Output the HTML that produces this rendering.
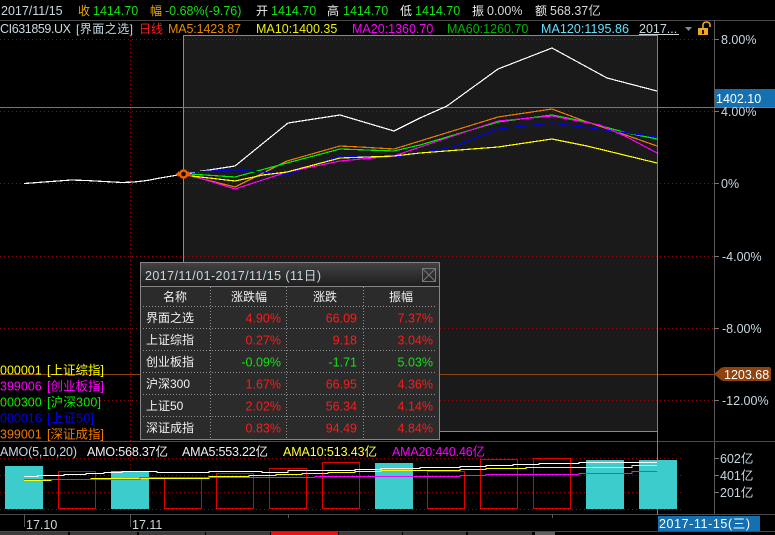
<!DOCTYPE html>
<html><head><meta charset="utf-8"><style>
html,body{margin:0;padding:0;background:#000;width:775px;height:535px;overflow:hidden}
svg{display:block;position:absolute;left:0;top:0}
text{font-family:"Liberation Sans","Noto Sans CJK SC",sans-serif;font-size:12.5px;fill:#d8d8d8}
.g{fill:#14e014}.o{fill:#f0a800}.w{fill:#f0f0f0}.r{fill:#ff1a1a}.v{fill:#c8d8e0}
.l line,.c{shape-rendering:crispEdges}
polyline{fill:none;shape-rendering:crispEdges;stroke-width:1.2}
.vol polyline{stroke-width:1}
.d{stroke:#8c0a0a;stroke-width:1;stroke-dasharray:1 3;shape-rendering:crispEdges}
.p{stroke:#909090;stroke-width:1;stroke-dasharray:1 2;shape-rendering:crispEdges}
</style></head><body>
<svg width="775" height="535" viewBox="0 0 775 535" xmlns="http://www.w3.org/2000/svg">
<rect width="775" height="535" fill="#000"/>
<!-- overlay background -->
<rect class="c" x="183" y="35" width="475" height="397" fill="#1a1a1a"/>
<!-- grid -->
<g class="d">
<line x1="0" y1="39.5" x2="714" y2="39.5"/><line x1="0" y1="111.5" x2="714" y2="111.5"/>
<line x1="0" y1="183.5" x2="714" y2="183.5"/><line x1="0" y1="256.5" x2="714" y2="256.5"/>
<line x1="0" y1="328.5" x2="714" y2="328.5"/><line x1="0" y1="400.5" x2="714" y2="400.5"/>
<line x1="130.5" y1="36" x2="130.5" y2="510"/>
<line x1="0" y1="458.5" x2="684" y2="458.5"/><line x1="0" y1="475.5" x2="684" y2="475.5"/>
<line x1="0" y1="492.5" x2="684" y2="492.5"/><line x1="0" y1="509.5" x2="684" y2="509.5"/>
</g>
<!-- frame lines -->
<g class="l">
<line x1="0" y1="20.5" x2="775" y2="20.5" stroke="#4a4a4a"/>
<line x1="714.5" y1="20" x2="714.5" y2="514" stroke="#5a5a5a"/>
<line x1="0" y1="441.5" x2="775" y2="441.5" stroke="#4a4a4a"/>
<line x1="0" y1="514.5" x2="775" y2="514.5" stroke="#4a4a4a"/>
<line x1="0" y1="531.5" x2="775" y2="531.5" stroke="#4a4a4a"/>
<line x1="0" y1="107.5" x2="775" y2="107.5" stroke="#777"/>
<line x1="0" y1="374.5" x2="714" y2="374.5" stroke="#8a4412"/>
<line x1="183" y1="35.5" x2="658" y2="35.5" stroke="#8a8a8a"/>
<line x1="183.5" y1="35" x2="183.5" y2="432" stroke="#8a8a8a"/>
<line x1="183" y1="431.5" x2="658" y2="431.5" stroke="#8a8a8a"/>
<line x1="657.5" y1="35" x2="657.5" y2="515" stroke="#808080"/>
<line x1="24.5" y1="514" x2="24.5" y2="527" stroke="#555"/>
<line x1="130.5" y1="514" x2="130.5" y2="527" stroke="#555"/>
<line x1="288.5" y1="514" x2="288.5" y2="518" stroke="#555"/>
<line x1="552.5" y1="514" x2="552.5" y2="518" stroke="#555"/>
<line x1="714" y1="39.5" x2="719" y2="39.5" stroke="#777"/>
<line x1="714" y1="111.5" x2="719" y2="111.5" stroke="#777"/>
<line x1="714" y1="183.5" x2="719" y2="183.5" stroke="#777"/>
<line x1="714" y1="256.5" x2="719" y2="256.5" stroke="#777"/>
<line x1="714" y1="328.5" x2="719" y2="328.5" stroke="#777"/>
<line x1="714" y1="400.5" x2="719" y2="400.5" stroke="#777"/>
<line x1="714" y1="458.5" x2="719" y2="458.5" stroke="#777"/>
<line x1="714" y1="475.5" x2="719" y2="475.5" stroke="#777"/>
<line x1="714" y1="492.5" x2="719" y2="492.5" stroke="#777"/>
</g>
<!-- bottom tabs -->
<g class="c">
<rect x="0" y="532" width="68" height="3" fill="#3c3c3c"/><rect x="70" y="532" width="67" height="3" fill="#3c3c3c"/>
<rect x="139" y="532" width="66" height="3" fill="#3c3c3c"/><rect x="206" y="532" width="64" height="3" fill="#3c3c3c"/>
<rect x="271" y="532" width="67" height="3" fill="#ee1010"/><rect x="339" y="532" width="63" height="3" fill="#3c3c3c"/>
<rect x="403" y="532" width="63" height="3" fill="#3c3c3c"/><rect x="468" y="532" width="64" height="3" fill="#3c3c3c"/>
<rect x="535" y="532" width="20" height="3" fill="#606060"/>
</g>
<!-- main chart lines -->
<polyline stroke="#fff" points="24,183.5 31,183 44,182 58,181 71,180 86,180.5 104,181.5 122,182.5 134,182 147,180.5 160,178 172,176 183,174 235,166 288,123 340,115 394,131 420,118 447,106 498,69 552,48 607,78 657,91"/>
<polyline stroke="#f07a00" points="183,174 235,187 287,161 340,146 360,147 394,149 420,141 498,117 552,109 587,122 620,133 657,146"/>
<polyline stroke="#00f000" points="190,174 235,177 287,163 340,149 394,151 420,145 498,122 552,115 587,122 627,133 657,139"/>
<polyline stroke="#0000f0" points="190,172 235,170 263,172 287,175 340,156 394,157 420,153 453,147 498,129 552,123 613,131 657,137"/>
<polyline stroke="#ff00ff" points="190,175 235,189 287,172 340,161 394,156 420,147 498,121 552,116 600,125 627,137 657,153"/>
<polyline stroke="#ffff00" points="192,176 235,181 263,175 287,172 340,158 394,156 420,153 498,147 552,139 587,146 657,163"/>
<!-- marker -->
<circle cx="183.5" cy="174" r="3.5" fill="#1a0800" stroke="#f06000" stroke-width="2.4"/>
<path d="M176 174l3-3v6zM191 174l-3-3v6z" fill="#f06000"/>
<!-- volume bars -->
<g class="c">
<rect x="5" y="466" width="38" height="43" fill="#3ccccc"/>
<rect x="111" y="471" width="38" height="38" fill="#3ccccc"/>
<rect x="375" y="463" width="38" height="46" fill="#3ccccc"/>
<rect x="586" y="460" width="38" height="49" fill="#3ccccc"/>
<rect x="639" y="460" width="38" height="49" fill="#3ccccc"/>
<g fill="none" stroke="#e00000">
<rect x="58.5" y="471.5" width="37" height="37"/>
<rect x="164.5" y="477.5" width="37" height="31"/>
<rect x="216.5" y="473.5" width="37" height="35"/>
<rect x="269.5" y="468.5" width="37" height="40"/>
<rect x="322.5" y="462.5" width="37" height="46"/>
<rect x="427.5" y="471.5" width="37" height="37"/>
<rect x="480.5" y="459.5" width="37" height="49"/>
<rect x="533.5" y="458.5" width="37" height="50"/>
</g>
</g>
<g class="vol" transform="translate(0,.5)">
<polyline stroke="#fff" points="24,476 38,476 38,475 64,475 64,474 86,474 86,473 104,473 104,472 122,472 122,471 157,471 157,472 209,472 209,471 262,471 262,472 288,472 288,470 355,470 355,469 381,469 381,468 420,468 420,467 460,467 460,466 486,466 486,465 513,465 513,464 539,464 539,463 579,463 579,462 657,462"/>
<polyline stroke="#ffff00" points="24,480 51,480 51,479 91,479 91,478 209,478 209,476 249,476 249,475 276,475 276,474 302,474 302,473 328,473 328,472 355,472 355,471 381,471 381,470 460,470 460,469 486,469 486,468 526,468 526,467 632,467 632,465 657,465"/>
<polyline stroke="#ff00ff" points="24,479 140,479 140,477 315,477 315,476 460,476 460,475 486,475 486,474 579,474 579,473 632,473 632,471 657,471"/>
</g>
<!-- header row 1 -->
<text class="v" x="1" y="15">2017/11/15</text>
<text class="o" x="78" y="15" style="font-size:12px">收</text><text class="g" x="93" y="15">1414.70</text>
<text class="o" x="150" y="15" style="font-size:12px">幅</text><text class="g" x="165" y="15">-0.68%(-9.76)</text>
<text class="w" x="256" y="15" style="font-size:12px">开</text><text class="g" x="271" y="15">1414.70</text>
<text class="w" x="327" y="15" style="font-size:12px">高</text><text class="g" x="343" y="15">1414.70</text>
<text class="w" x="400" y="15" style="font-size:12px">低</text><text class="g" x="415" y="15">1414.70</text>
<text class="w" x="472" y="15" style="font-size:12px">振</text><text x="487" y="15">0.00%</text>
<text class="w" x="535" y="15" style="font-size:12px">额</text><text x="550" y="15">568.37亿</text>
<!-- header row 2 -->
<text class="v" x="0" y="33" textLength="71">CI631859.UX</text>
<text class="v" x="76" y="33" style="font-size:12px" textLength="57">[界面之选]</text>
<text class="r" x="139" y="33" style="font-size:12px">日线</text>
<text x="168" y="33" style="fill:#e88a00" textLength="73">MA5:1423.87</text>
<text x="256" y="33" style="fill:#f0f000">MA10:1400.35</text>
<text x="352" y="33" style="fill:#ff00ff">MA20:1360.70</text>
<text x="447" y="33" style="fill:#00b400">MA60:1260.70</text>
<text x="541" y="33" style="fill:#60e0ff" textLength="88">MA120:1195.86</text>
<text class="v" x="639" y="33">2017...</text>
<line class="c" x1="639" y1="34.5" x2="679" y2="34.5" stroke="#d0d0d0"/>
<path d="M685 27h7l-3.5 4z" fill="#8a8a8a"/>
<!-- lock -->
<path d="M703 28v-3.5a3.5 2.5 0 0 1 7 0V27" fill="none" stroke="#f0a820" stroke-width="1.6"/>
<rect class="c" x="698" y="28" width="10" height="7" fill="#f0a820"/>
<rect class="c" x="702" y="30" width="2" height="4" fill="#201000"/>
<!-- axis labels -->
<text class="v" x="721" y="44">8.00%</text>
<text class="v" x="721" y="116">4.00%</text>
<text class="v" x="721" y="188">0%</text>
<text class="v" x="722" y="261">-4.00%</text>
<text class="v" x="722" y="333">-8.00%</text>
<text class="v" x="722" y="405">-12.00%</text>
<text class="v" x="720" y="463">602亿</text>
<text class="v" x="720" y="480">401亿</text>
<text class="v" x="720" y="497">201亿</text>
<!-- tags -->
<rect class="c" x="715" y="89" width="60" height="18" fill="#1470b0"/>
<text class="w" x="716" y="103" style="fill:#fff">1402.10</text>
<polygon points="714,374 722,367 722,381" fill="#8f4410"/>
<rect x="722" y="367" width="49" height="14" rx="2" fill="#8f4410"/>
<text x="724" y="379" style="fill:#fff">1203.68</text>
<rect class="c" x="658" y="516" width="102" height="15" fill="#1470b0"/>
<text x="659" y="528" style="fill:#fff" textLength="91">2017-11-15(三)</text>
<!-- left list -->
<text x="0" y="374.5" style="fill:#ffff00">000001</text><text x="47" y="374.5" style="fill:#ffff00" textLength="57">[上证综指]</text>
<text x="0" y="390.5" style="fill:#ff00ff">399006</text><text x="47" y="390.5" style="fill:#ff00ff" textLength="57">[创业板指]</text>
<text x="0" y="406.5" style="fill:#00f000">000300</text><text x="47" y="406.5" style="fill:#00f000" textLength="54">[沪深300]</text>
<text x="0" y="422.5" style="fill:#0000f0">000016</text><text x="47" y="422.5" style="fill:#0000f0" textLength="47">[上证50]</text>
<text x="0" y="438.5" style="fill:#f07a00">399001</text><text x="47" y="438.5" style="fill:#f07a00" textLength="57">[深证成指]</text>
<!-- AMO row -->
<text class="v" x="0" y="456" textLength="77">AMO(5,10,20)</text>
<text class="w" x="87" y="456" textLength="81">AMO:568.37亿</text>
<text class="w" x="182" y="456" textLength="86">AMA5:553.22亿</text>
<text x="283" y="456" style="fill:#ffff40" textLength="94">AMA10:513.43亿</text>
<text x="392" y="456" style="fill:#ff00ff" textLength="93">AMA20:440.46亿</text>
<!-- dates -->
<text class="v" x="26" y="529">17.10</text>
<text class="v" x="132" y="529">17.11</text>
<!-- panel -->
<defs><linearGradient id="t" x1="0" y1="0" x2="0" y2="1"><stop offset="0" stop-color="#424242"/><stop offset="1" stop-color="#1c1c1c"/></linearGradient></defs>
<rect class="c" x="140" y="262" width="300" height="178" fill="#2b2b2b"/>
<rect class="c" x="141" y="263" width="298" height="24" fill="url(#t)"/>
<rect class="c" x="140.5" y="262.5" width="299" height="177" fill="none" stroke="#858585"/>
<line class="c" x1="140" y1="286.5" x2="440" y2="286.5" stroke="#858585"/>
<text class="v" x="145" y="280" textLength="176">2017/11/01-2017/11/15 (11日)</text>
<g fill="none" stroke="#777" class="c"><rect x="422.5" y="268.5" width="13" height="13"/></g>
<path d="M423 269l12 12M435 269l-12 12" stroke="#777" fill="none"/>
<g class="p">
<line x1="143" y1="306.5" x2="437" y2="306.5"/><line x1="143" y1="328.5" x2="437" y2="328.5"/>
<line x1="143" y1="350.5" x2="437" y2="350.5"/><line x1="143" y1="372.5" x2="437" y2="372.5"/>
<line x1="143" y1="394.5" x2="437" y2="394.5"/><line x1="143" y1="416.5" x2="437" y2="416.5"/>
<line x1="210.5" y1="287" x2="210.5" y2="439"/><line x1="286.5" y1="287" x2="286.5" y2="439"/><line x1="363.5" y1="287" x2="363.5" y2="439"/>
</g>
<text class="w" x="175" y="301" text-anchor="middle" style="font-size:12px">名称</text>
<text class="w" x="249" y="301" text-anchor="middle" style="font-size:12px">涨跌幅</text>
<text class="w" x="325" y="301" text-anchor="middle" style="font-size:12px">涨跌</text>
<text class="w" x="401" y="301" text-anchor="middle" style="font-size:12px">振幅</text>
<text class="w" x="146" y="322" style="font-size:12px">界面之选</text>
<text class="w" x="146" y="344" style="font-size:12px">上证综指</text>
<text class="w" x="146" y="366" style="font-size:12px">创业板指</text>
<text class="w" x="146" y="388" style="font-size:12px">沪深300</text>
<text class="w" x="146" y="410" style="font-size:12px">上证50</text>
<text class="w" x="146" y="432" style="font-size:12px">深证成指</text>
<g text-anchor="end">
<text class="r" x="281" y="322.5">4.90%</text><text class="r" x="357" y="322.5">66.09</text><text class="r" x="433" y="322.5">7.37%</text>
<text class="r" x="281" y="344.5">0.27%</text><text class="r" x="357" y="344.5">9.18</text><text class="r" x="433" y="344.5">3.04%</text>
<text class="g" x="281" y="366.5">-0.09%</text><text class="g" x="357" y="366.5">-1.71</text><text class="g" x="433" y="366.5">5.03%</text>
<text class="r" x="281" y="388.5">1.67%</text><text class="r" x="357" y="388.5">66.95</text><text class="r" x="433" y="388.5">4.36%</text>
<text class="r" x="281" y="410.5">2.02%</text><text class="r" x="357" y="410.5">56.34</text><text class="r" x="433" y="410.5">4.14%</text>
<text class="r" x="281" y="432.5">0.83%</text><text class="r" x="357" y="432.5">94.49</text><text class="r" x="433" y="432.5">4.84%</text>
</g>
</svg>
</body></html>
